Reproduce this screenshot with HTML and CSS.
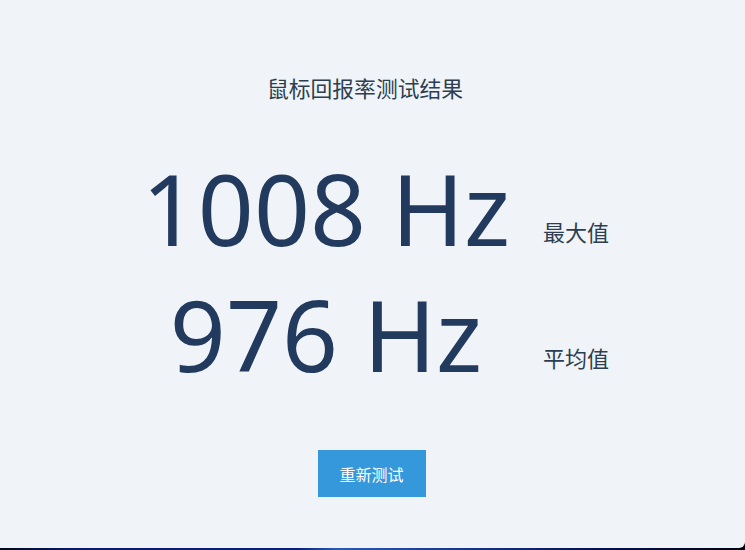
FILE: index.html
```html
<!DOCTYPE html>
<html lang="zh-CN">
<head>
<meta charset="utf-8">
<title>鼠标回报率测试结果</title>
<link rel="stylesheet" href="styles.css">
</head>
<body>
<div class="card">
  <h1 class="title">鼠标回报率测试结果</h1>
  <div class="results">
    <div class="row">
      <div class="value">1008 Hz</div>
      <div class="label">最大值</div>
    </div>
    <div class="row">
      <div class="value">976 Hz</div>
      <div class="label">平均值</div>
    </div>
  </div>
  <div class="actions">
    <button class="btn" type="button">重新测试</button>
  </div>
</div>
</body>
</html>
```
FILE: styles.css
```css
html, body {
  margin: 0;
  padding: 0;
}
body {
  width: 745px;
  height: 550px;
  overflow: hidden;
  background: linear-gradient(90deg, #05081a 0%, #0a1a6a 10%, #0d1f7a 40%, #2a5ab0 45%, #1a3a90 60%, #081050 80%, #020410 100%);
  font-family: "Noto Sans", "Noto Sans CJK SC", sans-serif;
}
.card {
  height: 548px;
  background: #f0f4f8;
  border-radius: 0 0 6px 0;
  box-sizing: border-box;
  padding-top: 74px;
  display: flex;
  flex-direction: column;
  align-items: center;
}
.title {
  margin: 0 15px 0 0;
  font-family: "Noto Sans CJK SC", sans-serif;
  font-weight: 400;
  font-size: 21.8px;
  line-height: 28px;
  color: #2c3e50;
}
.results {
  margin-top: 43px;
  width: 745px;
  display: flex;
  flex-direction: column;
}
.row {
  display: grid;
  grid-template-columns: 434px auto;
  margin-left: 109px;
  height: 126px;
}
.value {
  text-align: center;
  font-size: 98px;
  line-height: 126px;
  color: #223a5e;
  white-space: nowrap;
}
.label {
  align-self: end;
  padding-bottom: 29px;
  font-family: "Noto Sans CJK SC", sans-serif;
  font-size: 22px;
  line-height: 22px;
  color: #2c3e50;
}
.actions {
  margin-top: 53px;
  margin-right: 2px;
}
.btn {
  display: block;
  width: 108px;
  height: 47px;
  border: none;
  background: #3498db;
  color: #ffffff;
  font-family: "Noto Sans CJK SC", sans-serif;
  font-size: 16px;
  padding: 0;
  cursor: pointer;
}
```
